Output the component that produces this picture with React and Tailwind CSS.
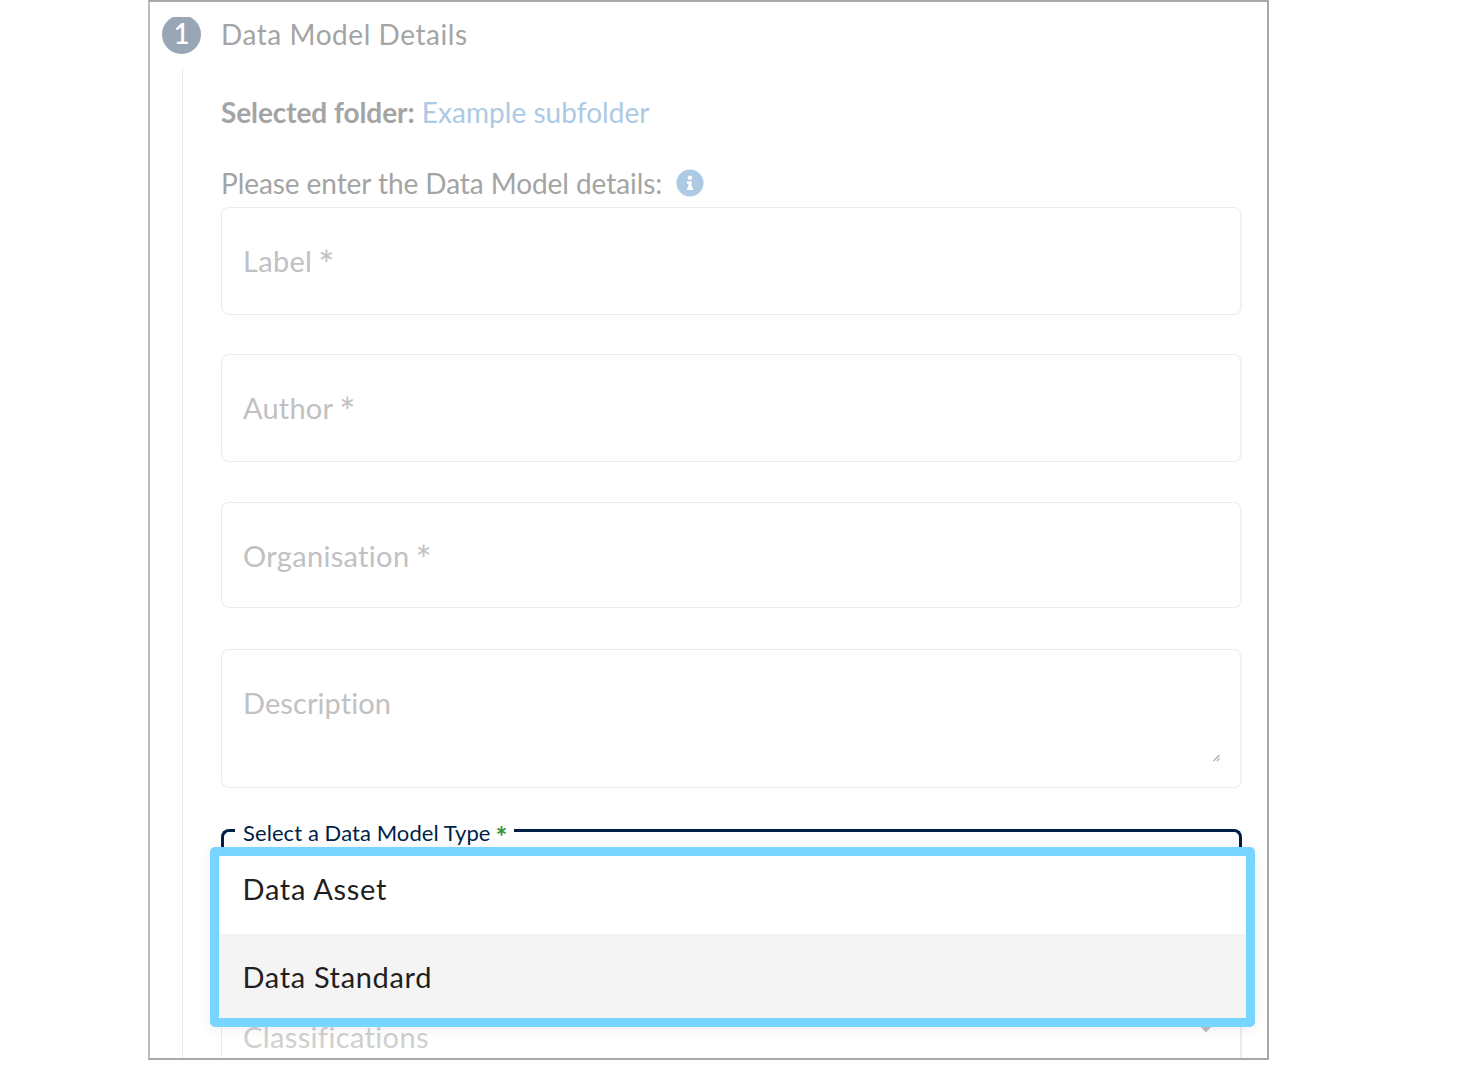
import { FaInfoCircle } from "react-icons/fa";

const fields = [
  { label: "Label", required: true, box: "h-[108px] mb-[39px]", text: "tracking-[0.3px]" },
  { label: "Author", required: true, box: "h-[108px] mb-[40px]", text: "tracking-[0.2px]" },
  { label: "Organisation", required: true, box: "h-[106px] mb-[41px] pt-px", text: "tracking-[0.32px]" },
];

function StepRail() {
  return (
    <div className="flex w-[71px] shrink-0 flex-col">
      <div className="ml-[12px] mt-[15px] h-[38px] w-[39px] overflow-hidden">
        <div className="-mt-[2px] flex h-[39px] w-[39px] items-center justify-center rounded-full bg-[#99a6b5] pb-[3px] font-medium text-white">
          1
        </div>
      </div>
      <div className="ml-[32px] mt-[13px] w-px grow bg-[#ececec]" />
    </div>
  );
}

function OptionsMenu() {
  return (
    <ul className="absolute left-[60px] top-[845px] h-[180px] w-[1045px] rounded-[5px] border-[9px] border-[#78d5ff] bg-white text-[29px] text-[#1f1f1f] shadow-[0_2px_16px_rgba(0,0,0,0.07)]">
      <li className="flex h-[78px] items-center pb-[12px] pl-[23.5px] tracking-[0.7px]">Data Asset</li>
      <li className="flex h-[84px] items-center bg-[#f4f4f4] pl-[23.5px] pt-px tracking-[0.65px]">Data Standard</li>
    </ul>
  );
}

export default function App() {
  return (
    <div className="h-[1087px] w-[1460px] overflow-hidden bg-white font-['Lato',sans-serif] text-[28px] leading-[36px]">
      <main className="relative ml-[148px] flex h-[1060px] w-[1121px] overflow-hidden border-2 border-[#a8a8a8] border-l-[#bcbcbc]">
        <StepRail />
        <section className="w-[1021px] shrink-0 text-[#a4a4a4]">
          <h1 className="mt-[14px] tracking-[0.55px]">Data Model Details</h1>
          <p className="mt-[42px]">
            <b className="tracking-[-0.08px]">Selected folder:</b>{" "}
            <a className="tracking-[0.05px] text-[#adcae4]">Example subfolder</a>
          </p>
          <div className="mt-[35px] flex h-[36px]">
            <span className="tracking-[-0.07px]">Please enter the Data Model details:</span>
            <FaInfoCircle className="ml-[14px] mt-[4px] size-[28px] text-[#adcae4]" />
          </div>
          <div className="mt-[6px] text-[29px] text-[#c1c1c1]">
            {fields.map((f) => (
              <div key={f.label} className={"flex items-center rounded-[8px] border border-r-2 border-[#ececec] border-r-[#f2f2f2] pl-[21px] " + f.box}>
                <span className={f.text}>{f.label}</span>
                {f.required && <span className="ml-[6px] mt-[6px] text-[38px]">*</span>}
              </div>
            ))}
            <div className="mb-[41px] flex h-[139px] justify-between rounded-[8px] border border-r-2 border-[#ececec] border-r-[#f2f2f2] pl-[21px] pr-[20px] pt-[35px]">
              <span className="tracking-[0.08px]">Description</span>
              <svg className="mt-[69px] size-[8px]" viewBox="0 0 8 8" stroke="#adadad" strokeWidth="1.3">
                <path d="M1.5 7 7.5 1M5 7 7.5 4.5" />
              </svg>
            </div>
          </div>
          <div className="flex h-[80px]">
            <div className="w-[14px] rounded-tl-[8px] border-l-[3px] border-t-[3px] border-[#001f47]" />
            <div className="-mt-[14px] flex w-[279px] whitespace-nowrap pl-[8px] text-[22px] text-[#001f47]">
              <span className="tracking-[0.08px]">Select a Data Model Type</span>
              <span className="ml-[5px] mt-[3px] text-[28px] font-bold text-[#3b943b]">*</span>
            </div>
            <div className="grow rounded-tr-[8px] border-r-[3px] border-t-[3px] border-[#001f47]" />
          </div>
          <div className="mt-[80px] flex h-[100px] justify-between border-x border-r-2 border-[#ececec] pl-[21px] pr-[27px] pt-[30px] text-[29px] text-[#d0d0d0]">
            <span className="tracking-[0.36px]">Classifications</span>
            <svg className="mt-[6px] h-[8px] w-[14px]" viewBox="0 0 14 8">
              <path d="M0 0h14L7 7.5Z" fill="#bdbdbd" />
            </svg>
          </div>
        </section>
        <OptionsMenu />
      </main>
    </div>
  );
}
